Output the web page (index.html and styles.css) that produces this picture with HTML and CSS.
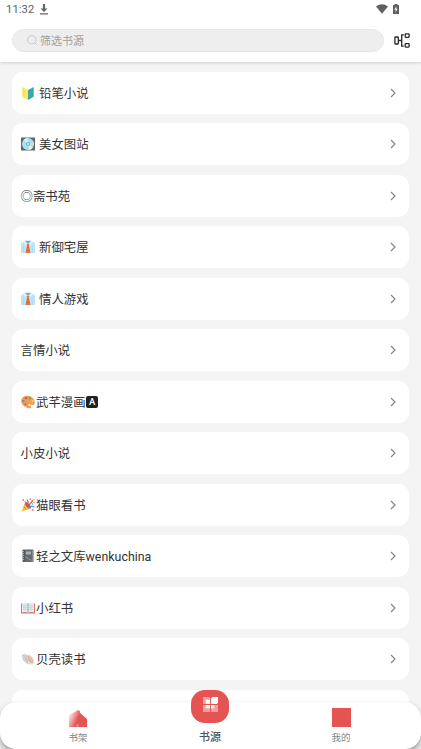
FILE: index.html
```html
<!DOCTYPE html>
<html lang="zh-CN">
<head>
<meta charset="utf-8">
<title>书源</title>
<link rel="stylesheet" href="styles.css">
</head>
<body>
<svg class="defs" width="0" height="0">
  <symbol id="arrow" viewBox="0 0 6 10"><path d="M1 1l4 4-4 4" fill="none" stroke="#858585" stroke-width="1.15"/></symbol>
  <symbol id="shirt" viewBox="0 0 14 14"><path d="M3.500 1L7 2l3.500-1L14 3.500V13H0V3.500z" fill="#bde3fa"/><path d="M2.500 6v7M11.500 6v7" stroke="#a5d5f3" stroke-width=".6"/><path d="M4 .8h6L7 5z" fill="#6fb2dc"/><path d="M3.500 1L7 4 5 6 2.500 2.500zM10.500 1L7 4l2 2 2.500-3.500z" fill="#d9f1ff"/><path d="M5.500 4h3l-.5 1.700L9.500 13h-5l1.500-7.300z" fill="#e5773f"/><path d="M5.700 8l2.200-1M5.300 11l3-1.500" stroke="#a65b3a" stroke-width=".6"/></symbol>
</svg>
<div class="app">
  <header class="top">
    <div class="status">
      <span class="time">11:32</span>
      <svg class="download" viewBox="0 0 8 11"><path d="M2.900 0h2.200v4.500h2.400L4 8 .5 4.500h2.400zM0 9.300h8v1.100H0z" fill="#666"/></svg>
      <svg class="wifi" viewBox="0 0 12 10"><path d="M0 2.500Q6-1.800 12 2.500L6 9.700z" fill="#606060"/></svg>
      <svg class="battery" viewBox="0 0 6 10"><path d="M1.600 0h2.800v1H6v9H0V1h1.600z" fill="#606060"/><path d="M3.500 2.200L1.300 5.800h1.500l-.4 2.700 2.300-3.700H3.200z" fill="#fff"/></svg>
    </div>
    <div class="tools">
      <div class="search">
        <svg class="lens" viewBox="0 0 12 12"><circle cx="5.200" cy="5.200" r="4.600" fill="none" stroke="#c0c0c0" stroke-width=".9"/><path d="M8.500 8.500l2.600 2.600" stroke="#c0c0c0" stroke-width=".9"/></svg>
        <span>筛选书源</span>
      </div>
      <svg class="tree" viewBox="0 0 16 15" fill="none" stroke="#292929" stroke-width="1.300"><rect x=".9" y="4" width="3.400" height="7" rx=".5"/><path d="M4.500 7.500h3M9.800 1.800H7.700v11.400h2.100"/><rect x="11.200" y=".9" width="3.900" height="3.400" rx=".5"/><rect x="11.200" y="10.700" width="3.900" height="3.400" rx=".5"/></svg>
    </div>
  </header>
  <main class="list">
    <div class="card"><svg class="emoji spaced" viewBox="0 0 14 14"><path d="M1.300 1L7 4v10l-5.700-3.300z" fill="#fbe34f"/><path d="M12.700 1L7 4v10l5.700-3.300z" fill="#38aaa1"/><path d="M2.500 2.800L5.800 4.500v7" fill="none" stroke="#fff08a"/></svg><span>铅笔小说</span><svg class="go"><use href="#arrow"/></svg></div>
    <div class="card"><svg class="emoji spaced" viewBox="0 0 14 14"><rect y=".5" width="14" height="13" fill="#5d666c"/><circle cx="7" cy="7" r="6.100" fill="#a8dfea"/><path d="M7 7L2.500 3A6 6 0 0 1 7 1zM7 7l5 3.500A6 6 0 0 1 8 13z" fill="#d8f2f5"/><path d="M7 7l5.800-2.200a6 6 0 0 1 .2 3.200z" fill="#ead8a0"/><circle cx="7" cy="7" r="2" fill="#59b4cf"/><circle cx="7" cy="7" r="1" fill="#eee"/></svg><span>美女图站</span><svg class="go"><use href="#arrow"/></svg></div>
    <div class="card"><span>◎斋书苑</span><svg class="go"><use href="#arrow"/></svg></div>
    <div class="card"><svg class="emoji spaced"><use href="#shirt"/></svg><span>新御宅屋</span><svg class="go"><use href="#arrow"/></svg></div>
    <div class="card"><svg class="emoji spaced"><use href="#shirt"/></svg><span>情人游戏</span><svg class="go"><use href="#arrow"/></svg></div>
    <div class="card"><span>言情小说</span><svg class="go"><use href="#arrow"/></svg></div>
    <div class="card"><svg class="emoji" viewBox="0 0 14 14"><path d="M5.500.7C10 .2 14 4 13.800 8c0 2-1.800 2-3 1.800-1.600-.2-1.300 1-.8 2 .8 1.800-2 1.800-4 .9C1.500 11 0 8 .2 5.200.4 2.600 2.800 1 5.500.7z" fill="#ed9d58"/><circle cx="5" cy="3.200" r="1.100" fill="#d84a43"/><circle cx="8.700" cy="3.200" r="1.100" fill="#68a547"/><circle cx="11.500" cy="6.200" r="1.100" fill="#f5d748"/><circle cx="2.600" cy="6" r="1.100" fill="#3697c8"/><circle cx="4.500" cy="9.200" r="1" fill="#b36679"/><circle cx="8.300" cy="10" r="1" fill="#fff"/></svg><span>武芊漫画</span><span class="letter">A</span><svg class="go"><use href="#arrow"/></svg></div>
    <div class="card"><span>小皮小说</span><svg class="go"><use href="#arrow"/></svg></div>
    <div class="card"><svg class="emoji" viewBox="0 0 14 14"><path d="M.5 13.500l3.700-9 5.500 6z" fill="#f7c23b"/><path d="M2.600 8.500l3 3.500M3.600 6l4 5" stroke="#e58b31"/><ellipse cx="7" cy="7.300" rx="1.600" ry="4" transform="rotate(-43 7 7.300)" fill="#b9577a"/><path d="M6 6c2-1 1-3 0-4.500M8.500 7c0-2 3-2 3-5" fill="none" stroke="#e7504a" stroke-width="1.300"/><path d="M9 9c2-2 3 .5 4.500-.5" fill="none" stroke="#49a9db" stroke-width="1.300"/><path d="M1.500 2h1.500M8.500 1.200H10M12.500 4.500h1M11 12h1.500" stroke="#e15eaa" stroke-width="1.300"/><path d="M3.500 3.500h1M12.500 1.500h1M11 6h1" stroke="#50b9dc" stroke-width="1.300"/></svg><span>猫眼看书</span><svg class="go"><use href="#arrow"/></svg></div>
    <div class="card"><svg class="emoji" viewBox="0 0 14 14"><rect x="1.500" y=".5" width="11" height="12.500" rx=".7" fill="#656b6e"/><path d="M3 1v12" stroke="#45494b"/><path d="M1 2.500h2M1 4.500h2M1 6.500h2M1 8.500h2M1 10.500h2" stroke="#c3c7c8" stroke-width=".7"/><rect x="5" y="2.500" width="5" height="3" fill="#a9b0b2"/><path d="M4.500 8l6 3.500M11.800 1v12" stroke="#9ba1a3" stroke-width=".8"/></svg><span>轻之文库wenkuchina</span><svg class="go"><use href="#arrow"/></svg></div>
    <div class="card"><svg class="emoji" viewBox="0 0 14 14"><path d="M0 2.500h14v10H0z" fill="#df6e68"/><path d="M1 2q3.500-1.300 6 .5 2.500-1.800 6-.5v9.500q-3.500-1-6 .5-2.500-1.500-6-.5z" fill="#e4edf0"/><path d="M7 2.500V12" stroke="#87969d" stroke-width=".8"/><path d="M2 4.200h3.800M2 6.200h3.800M2 8.200h3.800M8.200 4.200H12M8.200 6.200H12M8.200 8.200H12" stroke="#b5c1c6" stroke-width=".7"/></svg><span>小红书</span><svg class="go"><use href="#arrow"/></svg></div>
    <div class="card"><svg class="emoji" viewBox="0 0 14 14"><path d="M1 2l2 .5 1-1L6 3c3-1 7 3 7 7 0 2-3 3-5.500 2.300C3 11 0 6 1 2z" fill="#dddbd8"/><path d="M2 3l5 7M4.500 3l2 6M2 7l5 4" stroke="#adb1b1" stroke-width=".6"/><path d="M6.500 4c3 0 6 3.500 5.800 7-2.500.3-5.300-2.500-5.800-7z" fill="#eea779"/><path d="M8 5l3.500 5" stroke="#f8d0ae"/></svg><span>贝壳读书</span><svg class="go"><use href="#arrow"/></svg></div>
    <div class="card"></div>
  </main>
  <nav class="nav">
    <div class="tab shelf">
      <svg class="house" viewBox="0 0 18 17"><defs><linearGradient id="fade" gradientUnits="userSpaceOnUse" x1="0" y1="5" x2="9" y2="9"><stop stop-color="#fce8e8"/><stop offset=".5" stop-color="#f0a1a1"/><stop offset="1" stop-color="#e55353"/></linearGradient></defs><path d="M0 5L9 0l2 1v2l7 6v8H0z" fill="url(#fade)"/><path d="M7 14h3v3H7z" fill="#ea7777"/></svg>
      <span>书架</span>
    </div>
    <div class="tab active">
      <div class="bubble"><svg viewBox="0 0 16 16" class="grid"><path d="M0 0h7.500v7.500H0zM0 8.500h7.500V16H0zM8.500 8.500H16V16H8.500z" fill="#f1a0a0"/><path d="M8.500 1.500L10 0h6v6l-1.500 1.500h-6z" fill="#fff"/><path d="M3 3h4.500v4.500H3zM3 8.500h4.500V12H3zM8.500 8.500H12V12H8.500z" fill="#fff"/></svg></div>
      <span>书源</span>
    </div>
    <div class="tab mine">
      <div class="square"></div>
      <span>我的</span>
    </div>
  </nav>
</div>
</body>
</html>
```
FILE: styles.css
```css
* { box-sizing: border-box; }
body { margin: 0; font-family: Roboto, "Noto Sans CJK SC", sans-serif; }
svg { display: block; flex: none; }
.defs { position: absolute; }
.app { position: relative; width: 421px; height: 749px; overflow: hidden; background: #f4f4f4; }
.top { height: 62px; background: #fff; box-shadow: 0 1px 3px rgba(0, 0, 0, .16); }
.status { height: 19px; display: flex; align-items: center; padding: 0 22px 0 6px; }
.time { font-size: 11.200px; line-height: 19px; letter-spacing: .1px; color: #606060; }
.download { width: 8px; height: 11px; margin-left: 6px; }
.wifi { width: 12px; height: 10px; margin: 0 0 1px auto; }
.battery { width: 6px; height: 10px; margin: 0 0 2px 5px; }
.tools { display: flex; align-items: center; padding: 10px 11px 0 12px; }
.search { width: 372px; height: 23px; display: flex; align-items: center; gap: 2px; padding-left: 14px; border: 1px solid #e7e7e7; border-radius: 12px; background: #eee; font-size: 11px; line-height: 21px; color: #a0a0a0; }
.search span { padding-top: 1px; }
.lens { width: 11px; height: 11px; }
.tree { width: 16px; height: 15px; margin-left: auto; }
.list { display: flex; flex-direction: column; gap: 9.500px; padding: 9.700px 12.500px 0 12px; }
.card { height: 42px; flex: none; display: flex; align-items: center; padding: 0 12.500px 0 8.500px; border-radius: 11px; background: #fff; font-size: 12.400px; line-height: 20px; color: #333; }
.card span:not(.letter) { padding-top: 2px; }
.emoji { width: 14px; height: 14px; margin-right: 1.500px; }
.spaced { margin-right: 4.500px; }
.letter { width: 12px; height: 12px; margin-left: .5px; border-radius: 2px; background: #222; color: #fff; font-size: 9.500px; font-weight: 500; line-height: 12px; text-align: center; }
.go { width: 6px; height: 10px; margin-left: auto; }
.nav { position: absolute; left: 0; right: 0; bottom: 0; height: 47px; display: grid; grid-template-columns: 156px 108px 154px; border-radius: 16px; background: #fff; box-shadow: 0 0 1px rgba(0, 0, 0, .1), 0 4px 6px rgba(0, 0, 0, .35); }
.tab { display: flex; flex-direction: column; align-items: center; font-size: 9.500px; line-height: 14px; color: #858585; }
.house { width: 18px; height: 17px; margin: 8px 0 4px; }
.active { font-size: 11px; font-weight: 500; color: #555; }
.bubble { width: 38px; height: 33px; flex: none; margin: -12px 0 8px; display: flex; justify-content: center; padding-top: 7px; border-radius: 14px; background: #e55353; }
.grid { width: 15px; height: 15px; }
.square { width: 19px; height: 19px; flex: none; margin: 6px 0 4px; background: #e55353; }
```
